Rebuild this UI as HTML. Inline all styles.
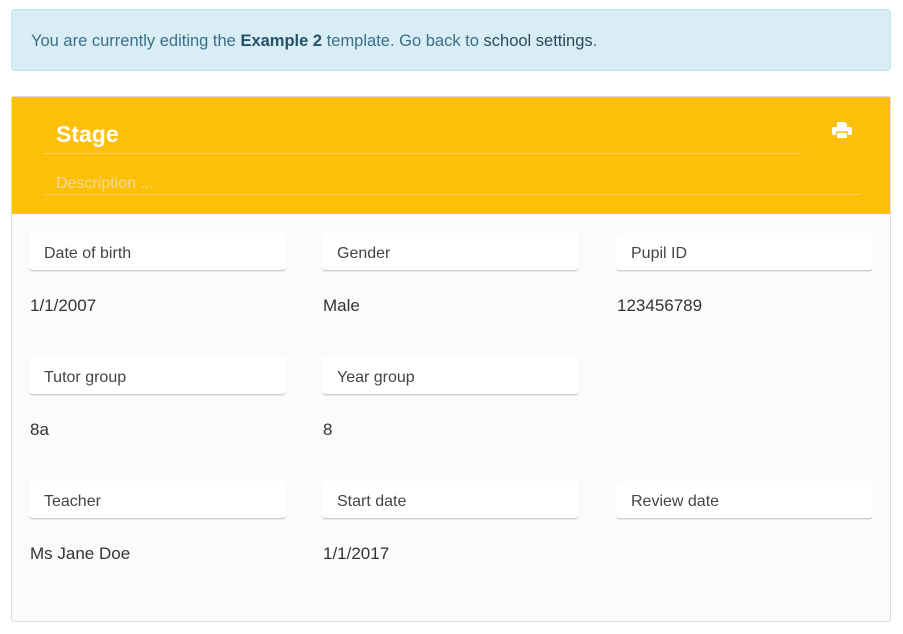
<!DOCTYPE html>
<html><head><style>
body{margin:0;width:903px;height:634px;background:#fff;font-family:"Liberation Sans",sans-serif;position:relative;overflow:hidden}
.alert{position:absolute;left:11px;top:9px;background:#d9edf7;border:1px solid #bce8f1;border-radius:4px;color:#3a6f88;font-size:16.5px;line-height:62px;padding-left:19px;box-sizing:border-box;width:880px;height:62px}
.alert b{color:#245269}
.alert span{color:#2a4a5a}
.panel{position:absolute;left:11px;top:96px;width:880px;height:526px;background:#fafbfb;border:1px solid #ddd;box-sizing:border-box;border-radius:3px}
.head{position:absolute;left:0;top:0;width:878px;height:117px;background:#fdc009}
.title{position:absolute;left:44px;top:24px;color:#fff;font-weight:bold;font-size:23px}
.l1{position:absolute;left:32px;top:56px;width:758px;border-top:1px dotted #fde39a}
.desc{position:absolute;left:44px;top:78px;color:#f3d898;font-size:16px}
.l2{position:absolute;left:32px;top:97px;width:817px;border-top:1px dotted #fde39a}
.box{position:absolute;width:257px;height:38px;background:#fff;border-radius:4px;border-bottom:1px dotted #999;box-sizing:border-box;padding-left:15px;padding-top:2px;line-height:37px;font-size:16px;color:#444;box-shadow:0 1px 1px rgba(0,0,0,.08)}
.val{position:absolute;font-size:17px;color:#333;margin-top:1px}
</style></head><body>
<div class="alert">You are currently editing the <b>Example 2</b> template. Go back to <span>school settings</span>.</div>
<div class="panel">
<div class="head">
<div class="title">Stage</div><div class="l1"></div>
<div class="desc">Description ...</div><div class="l2"></div>
<svg style="position:absolute;left:820px;top:24px" width="20" height="18" viewBox="0 0 20 18"><path d="M5 1h8l2 2v3H5z" fill="#fff"/><rect x="0" y="6" width="20" height="8" rx="2" fill="#fff"/><rect x="5" y="11" width="10" height="6" fill="#fff" stroke="#fdc009" stroke-width="1.5"/><rect x="5" y="13" width="10" height="4" fill="#fff"/></svg>
</div>
</div>
<div class="box" style="left:29px;top:233px">Date of birth</div>
<div class="box" style="left:322px;top:233px">Gender</div>
<div class="box" style="left:616px;top:233px">Pupil ID</div>
<div class="val" style="left:30px;top:295px">1/1/2007</div>
<div class="val" style="left:323px;top:295px">Male</div>
<div class="val" style="left:617px;top:295px">123456789</div>
<div class="box" style="left:29px;top:357px">Tutor group</div>
<div class="box" style="left:322px;top:357px">Year group</div>
<div class="val" style="left:30px;top:419px">8a</div>
<div class="val" style="left:323px;top:419px">8</div>
<div class="box" style="left:29px;top:481px">Teacher</div>
<div class="box" style="left:322px;top:481px">Start date</div>
<div class="box" style="left:616px;top:481px">Review date</div>
<div class="val" style="left:30px;top:543px">Ms Jane Doe</div>
<div class="val" style="left:323px;top:543px">1/1/2017</div>
</body></html>
